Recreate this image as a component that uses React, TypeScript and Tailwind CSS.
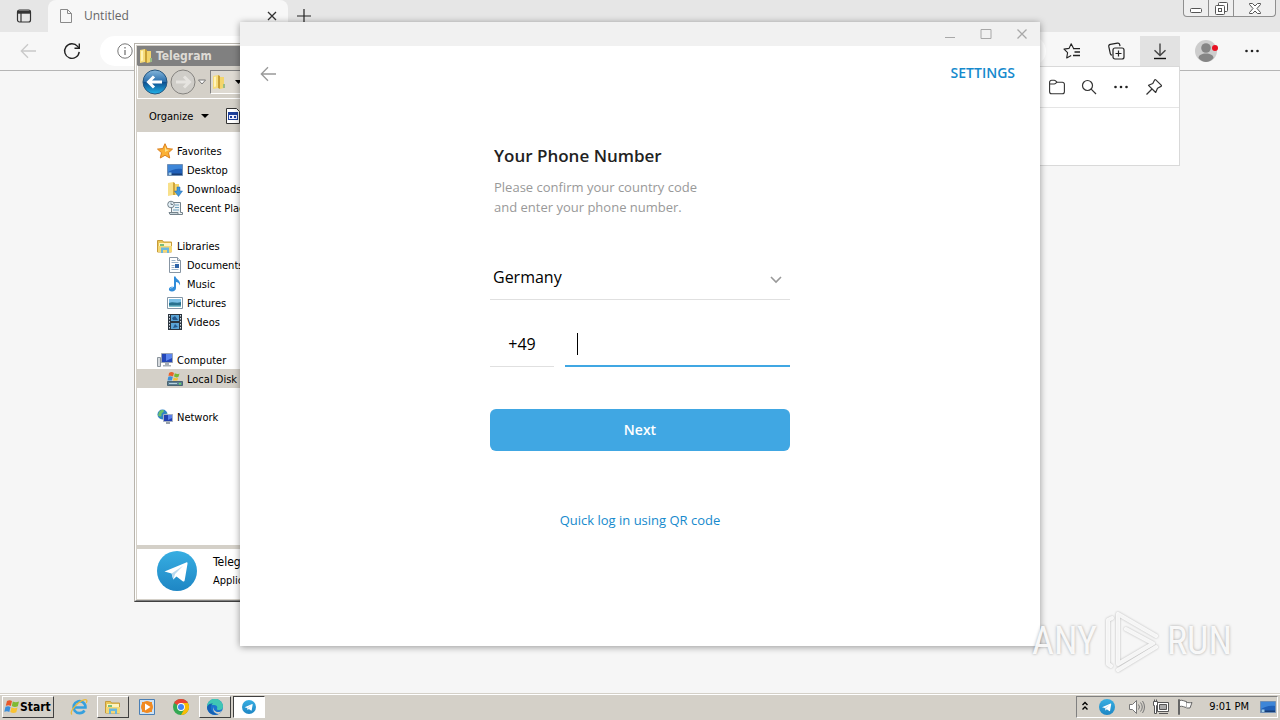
import React, { FC, ReactNode } from "react";
import clsx from "clsx";

interface IconProps {
  className?: string;
}

/* ---------- browser icons ---------- */

const TabActionsIcon = () => (
  <svg className="h-4 w-4" viewBox="0 0 16 16" fill="none" stroke="#333">
    <rect x="1.5" y="2" width="13" height="12" rx="2" strokeWidth="1.2" />
    <path d="M1.5 4.2h13" strokeWidth="3" />
    <path d="M5 5v9" strokeWidth="1.2" />
  </svg>
);

const PageIcon = () => (
  <svg className="h-4 w-4" viewBox="0 0 16 16" fill="none" stroke="#8a8a8a">
    <path d="M2.5 1.5h7l4 4v9h-11zM9.5 1.5v4h4" />
  </svg>
);

const ReloadIcon = () => (
  <svg className="h-5 w-5" viewBox="0 0 20 20" fill="none" stroke="#222" strokeWidth="1.4">
    <path d="M17.2 10.8A7.3 7.3 0 1 1 15.6 5.4L17 7" />
    <path d="M17.3 2.5v4.8h-4.8" />
  </svg>
);

const ArrowLeftIcon: FC<IconProps> = ({ className }) => (
  <svg className={className} viewBox="0 0 18 18" fill="none" stroke="currentColor" strokeWidth="1.5">
    <path d="M18 9H1.500M9 1.500L1.500 9 9 16.500" />
  </svg>
);

const InfoIcon = () => (
  <svg className="h-4 w-4" viewBox="0 0 16 16" fill="none" stroke="#777">
    <circle cx="8" cy="8" r="7.2" />
    <path d="M8 7v5M8 4v1.4" strokeWidth="1.3" />
  </svg>
);

const StarLinesIcon = () => (
  <svg className="h-[18px] w-[18px]" viewBox="0 0 18 18" fill="none" stroke="#222" strokeWidth="1.1">
    <path d="M10.600 6.600L8.200 1.700 6 6.400l-5 .7 3.600 3.500-.9 5.300 4.500-2.500" strokeLinejoin="round" />
    <path d="M10 6.600h7M11.500 10h5.500M10 13.500h7" strokeWidth="1.300" />
  </svg>
);

const CollectionsIcon = () => (
  <svg className="h-[18px] w-[18px]" viewBox="0 0 18 18" fill="none" stroke="#222" strokeWidth="1.2">
    <rect x="6" y="6" width="11" height="11" rx="2" />
    <path d="M11.5 8.5v6M8.5 11.5h6" />
    <path d="M5 13.2a2 2 0 0 1-1.7-1.6L1.800 4.700a2 2 0 0 1 1.600-2.300l7-1.300a2 2 0 0 1 2.300 1.600l.3 1.500" />
  </svg>
);

const DownloadIcon = () => (
  <svg className="h-[18px] w-[18px]" viewBox="0 0 18 18" fill="none" stroke="#444" strokeWidth="1.4">
    <path d="M9 1.500v12M3.500 8.300L9 13.600l5.500-5.300" />
    <path d="M3 16.500h12" stroke="#111" />
  </svg>
);

const AvatarIcon = () => (
  <svg className="h-6 w-6" viewBox="0 0 24 24">
    <circle cx="11" cy="12" r="11" fill="#cdcdcd" />
    <circle cx="11" cy="9" r="4.800" fill="#858585" />
    <path d="M3.500 19c0-3 3.500-4.500 7.500-4.500s7.500 1.500 7.500 4.500c-2 2.800-5 4-7.500 4s-5.500-1.200-7.500-4z" fill="#858585" />
    <circle cx="20" cy="9" r="3" fill="#e81123" />
  </svg>
);

const DotsIcon = () => (
  <svg className="h-4 w-4" viewBox="0 0 16 16" fill="#222">
    <circle cx="2.500" cy="8" r="1.300" />
    <circle cx="8" cy="8" r="1.300" />
    <circle cx="13.500" cy="8" r="1.300" />
  </svg>
);

const OpenFolderIcon = () => (
  <svg className="h-4 w-4" viewBox="0 0 16 16" fill="none" stroke="#333" strokeWidth="1.100">
    <path d="M.6 4V3.200A2 2 0 0 1 2.600 1.200h2.600c.6 0 1 .2 1.400.6L8 3.200h5.400a2 2 0 0 1 2 2v7.600a2 2 0 0 1-2 2H2.600a2 2 0 0 1-2-2z" />
    <path d="M.6 5h4.600c.6 0 1-.2 1.400-.6L8 3.200" />
  </svg>
);

const SearchIcon = () => (
  <svg className="h-4 w-4" viewBox="0 0 16 16" fill="none" stroke="#333" strokeWidth="1.200">
    <circle cx="6.500" cy="6.500" r="5" />
    <path d="M10.200 10.200L15 15" />
  </svg>
);

const PinIcon = () => (
  <svg className="h-[18px] w-[18px]" viewBox="0 0 18 18" fill="none" stroke="#333" strokeWidth="1.200" strokeLinejoin="round">
    <path d="M10.800 1.800l5.400 5.400c.4.400.3 1-.2 1.200l-3.500 1.800-1.800 4.300-7.200-7.200 4.300-1.800 1.800-3.500c.2-.5.8-.6 1.200-.2z" />
    <path d="M7 11l-5.500 5.500" />
  </svg>
);

/* ---------- explorer icons ---------- */

const FolderIcon = () => (
  <svg className="h-4 w-4 shrink-0" viewBox="0 0 16 16">
    <path d="M2 2l5-1v13l-5 1z" fill="#f6dc7b" />
    <path d="M7 1l2 1v13l-2-1z" fill="#c9a035" />
    <path d="M9 3h4v11l-4 1z" fill="#f3d56c" />
    <path d="M3 3l2-.5v10L3 13z" fill="#fff3b8" />
    <path d="M12 10h2v4h-2z" fill="#9cbc86" />
  </svg>
);

const StarIcon = () => (
  <svg className="h-4 w-4 shrink-0" viewBox="0 0 16 16">
    <path d="M8 .7l2.200 4.900 5.300.5-4 3.600 1.200 5.300L8 12.300 3.300 15l1.200-5.300-4-3.600 5.300-.5z" fill="#fbb034" stroke="#db7f1d" />
    <path d="M8 3l1.300 3.500 3.200.3L8 9z" fill="#ffe28a" />
  </svg>
);

const DesktopIcon: FC<IconProps> = ({ className }) => (
  <svg className={clsx("h-4 w-4 shrink-0", className)} viewBox="0 0 16 16">
    <path d="M.5 2.500h15v11H.5z" fill="#2060b8" stroke="#6f8fb5" />
    <path d="M1 3h14v4C9 6 5 8 1 10z" fill="#3e86d8" />
    <path d="M1 11.500h14V13H1z" fill="#173d75" />
    <path d="M1.500 10.500h3V13h-3z" fill="#9ecbe8" />
  </svg>
);

const DownloadsIcon = () => (
  <svg className="h-4 w-4 shrink-0" viewBox="0 0 16 16">
    <path d="M1 2l5-1v13l-5 1z" fill="#f8e08a" />
    <path d="M6 1l2 1v12H6z" fill="#d0a63a" />
    <path d="M8 3h4v11H8z" fill="#f3d56c" />
    <path d="M10 6h3v4h2.500l-4 5.500-4-5.500H10z" fill="#3f97dc" stroke="#2366ac" strokeWidth=".5" />
  </svg>
);

const RecentIcon = () => (
  <svg className="h-4 w-4 shrink-0" viewBox="0 0 16 16" stroke="#74828b">
    <path d="M4.500 2.500h9v10h2v2h-11z" fill="#eef3f5" />
    <path d="M8 5h4M8 7.500h4M6 10h6" stroke="#6ea0bd" />
    <circle cx="4" cy="4.500" r="3.300" fill="#e4f0f7" />
    <path d="M4 2.500v2h2" fill="none" />
    <path d="M2 12.500h9v2H3z" fill="#c7d3d8" />
  </svg>
);

const LibrariesIcon = () => (
  <svg className="h-4 w-4 shrink-0" viewBox="0 0 16 16">
    <path d="M.5 2.500h5l1 1.500h8v10H.5z" fill="#e9c757" stroke="#c79b3a" />
    <path d="M2 5h12v4H2z" fill="#fdf3c0" />
    <path d="M3 6h4v3H3z" fill="#78bd7a" />
    <path d="M1 8h14v6H1z" fill="#f4d874" />
    <path d="M4 9.500h8V15h-2v-3H6v3H4z" fill="#69b7de" />
  </svg>
);

const DocumentsIcon = () => (
  <svg className="h-4 w-4 shrink-0" viewBox="0 0 16 16">
    <path d="M2.500.5h8l3 3v12h-11z" fill="#fff" stroke="#8795a3" />
    <path d="M10.500.5v3h3" fill="#dde6ee" stroke="#8795a3" />
    <path d="M4.500 3.500h4M4.500 5.500h7M4.500 8.500h3M4.500 10.500h3M4.500 12.500h7" stroke="#9db6cc" />
    <path d="M8 7h4v4H8z" fill="#2d64a8" />
  </svg>
);

const MusicIcon = () => (
  <svg className="h-4 w-4 shrink-0" viewBox="0 0 16 16">
    <path d="M7 .5h1.500c.5 3 5.500 3.500 4.500 9-1-3-2.500-3.500-4-3.500v6c0 2-1.800 3.500-4 3.500S1.500 14.300 2 12.800C2.500 11 5 10.500 7 11z" fill="#2f8cda" />
    <path d="M3.500 12.500c.5-.8 1.500-1 2.500-.8" stroke="#a5d6f8" fill="none" />
  </svg>
);

const PicturesIcon = () => (
  <svg className="h-4 w-4 shrink-0" viewBox="0 0 16 16">
    <path d="M.5 2.500h15v11H.5z" fill="#fff" stroke="#8496a6" />
    <path d="M2 4h12v8H2z" fill="#7bc0e6" />
    <path d="M2 8c4-2 7 1 12-1v5H2z" fill="#28718e" />
    <path d="M2 10.500h12V12H2z" fill="#7fc3cf" />
  </svg>
);

const VideosIcon = () => (
  <svg className="h-4 w-4 shrink-0" viewBox="0 0 16 16">
    <path d="M1 0h14v16H1z" fill="#2c3640" />
    <path d="M4 1h8v6H4zM4 9h8v6H4z" fill="#5aa4d6" />
    <path d="M5 4l3-2 3 4H6zM6 14l2-4 3 3z" fill="#24578b" />
    <path d="M2.500 1v14M13.500 1v14" stroke="#d5dde4" strokeDasharray="1.500 1.500" />
  </svg>
);

const ComputerIcon = () => (
  <svg className="h-4 w-4 shrink-0" viewBox="0 0 16 16">
    <path d="M.5 5.500h3v9h-3z" fill="#d6dade" stroke="#8b949c" />
    <path d="M4.500 1.500h11v9h-11z" fill="#2346b8" stroke="#9aa4b4" />
    <path d="M9 2h6v4L9 9z" fill="#5c86ee" />
    <path d="M8 11h4v2h2v1.500H6V13h2z" fill="#a8b0b8" />
  </svg>
);

const DiskIcon = () => (
  <svg className="h-4 w-4 shrink-0" viewBox="0 0 16 16">
    <path d="M2 2c2-1.500 3.500-1 5 0L6 5.500C4.500 4.500 3 4.500 1.500 5z" fill="#e9622b" />
    <path d="M7.800 2.300c1.700 1 3.200 1 4.700.2l-1 3.300c-1.500 1-3 .7-4.500-.2z" fill="#78b833" />
    <path d="M1.300 5.800c1.500-1 3-.6 4.500.3l-1 3.400H.5z" fill="#3c8fd8" />
    <path d="M6.700 6.500c1.500.9 3 1 4.500.2l-.8 2.800H6z" fill="#f6c02e" />
    <path d="M.5 10.500h15v4H.5z" fill="#5d7f93" stroke="#4b6472" />
    <path d="M2 12.500h8" stroke="#b9d3de" />
    <path d="M12 12h2v1.500h-2z" fill="#5fe35f" />
  </svg>
);

const NetworkIcon = () => (
  <svg className="h-4 w-4 shrink-0" viewBox="0 0 16 16">
    <circle cx="5.500" cy="5.500" r="5" fill="#2f83c6" />
    <path d="M2 3c2-3 5-2 5-1S4 4 4.500 6 2 8 1 6.500zM7 6l3-2v3L8 9z" fill="#6cc06a" />
    <path d="M6.500 5.500h9v7h-9z" fill="#2340b0" stroke="#a7b1c2" />
    <path d="M11 6h4v3l-4 2z" fill="#5b80ea" />
    <path d="M9 13h4v2H9z" fill="#98a1aa" />
  </svg>
);

const CalendarIcon = () => (
  <svg className="h-4 w-4 shrink-0" viewBox="0 0 16 16">
    <path d="M1.500.5h10l3 3v12h-13z" fill="#fff" stroke="#333" />
    <path d="M3 4h10v8H3z" fill="#1d3f9c" />
    <path d="M4 7h8v4H4z" fill="#eef" />
    <path d="M5 8h2v2H5zM9 8h2v2H9z" fill="#1d3f9c" />
  </svg>
);

const TelegramIcon: FC<IconProps> = ({ className }) => (
  <svg className={clsx("shrink-0", className)} viewBox="0 0 40 40">
    <defs>
      <linearGradient id="tg" x1="0" y1="0" x2="0" y2="1">
        <stop offset="0" stopColor="#37aee2" />
        <stop offset="1" stopColor="#1e86c4" />
      </linearGradient>
    </defs>
    <circle cx="20" cy="20" r="20" fill="url(#tg)" />
    <path d="M7.500 20.500L29.200 11.400c1-.4 1.500.2 1.300 1.400l-2.800 16.500c-.2 1.200-1 1.500-2 .9l-6.200-4.600-3.200 3-1.700-6z" fill="#fff" />
    <path d="M14.600 22.600l11.500-7.800-8 8.300-1.800 5.500z" fill="#b9d9ee" />
  </svg>
);

const OrbIcon: FC<{ back?: boolean }> = ({ back }) => (
  <svg className="h-[26px] w-[26px]" viewBox="0 0 26 26">
    <defs>
      <linearGradient id="orb" x1="0" y1="0" x2="0" y2="1">
        <stop offset="0" stopColor="#86b7dc" />
        <stop offset=".48" stopColor="#2b6fac" />
        <stop offset=".5" stopColor="#0d4c8c" />
        <stop offset="1" stopColor="#22b4ea" />
      </linearGradient>
    </defs>
    <circle cx="13" cy="13" r="12" fill={back ? "url(#orb)" : "#cfcdc8"} stroke={back ? "#28577f" : "#85837f"} />
    <path
      d={back ? "M20 13H7M12 7.500L6.500 13l5.500 5.500" : "M6 13h13M14 7.500l5.500 5.500-5.500 5.500"}
      fill="none"
      stroke={back ? "#fff" : "#e6e4e0"}
      strokeWidth="3"
    />
  </svg>
);

/* ---------- taskbar icons ---------- */

const WindowsFlagIcon = () => (
  <svg className="h-4 w-4 shrink-0" viewBox="0 0 16 16">
    <path d="M3 2c2-1.200 3.500-1 5 0L6.800 7C5.300 6 3.800 6 1.800 6.800z" fill="#e8582a" />
    <path d="M8.800 2.500c2 1.100 4 1 6.200 0l-1.200 4.800c-2 1-4 .9-6-.2z" fill="#7fba35" />
    <path d="M1.500 7.800c2-.8 3.500-.8 5 .2l-1.200 5c-1.500-1-3-1-5-.2z" fill="#3a8edb" />
    <path d="M7.500 8.300c2 1.100 4 1.200 6 .2l-1.200 4.800c-2 1-4 .9-6-.2z" fill="#f9c333" />
  </svg>
);

const ExplorerIeIcon = () => (
  <svg className="h-[18px] w-[18px]" viewBox="0 0 18 18" fill="none">
    <path d="M14.500 12.500A6 6 0 1 1 15.500 9.500H4" stroke="#35a0de" strokeWidth="2.600" />
    <path d="M2 16.500C-1 14 7 4 14 1.800c3-.8 3.500 1 2.200 3.200" stroke="#e8b93c" strokeWidth="1.300" />
  </svg>
);

const MediaPlayerIcon = () => (
  <svg className="h-4 w-4" viewBox="0 0 16 16">
    <path d="M.5.500h15v15H.5z" fill="#cfe2f3" stroke="#4a7fb5" />
    <path d="M3 3h10v10H3z" fill="#f18a21" />
    <circle cx="8" cy="8" r="6" fill="#f18a21" />
    <path d="M6 4.500l5.500 3.500L6 11.500z" fill="#fff" />
  </svg>
);

const ChromeIcon = () => (
  <svg className="h-4 w-4" viewBox="0 0 16 16">
    <circle cx="8" cy="8" r="8" fill="#34a853" />
    <path d="M8 8L1.070 4A8 8 0 0 1 14.930 4z" fill="#ea4335" />
    <path d="M8 8V4h6.930A8 8 0 0 1 8 16l3.460-6z" fill="#fbbc05" />
    <circle cx="8" cy="8" r="3.900" fill="#fff" />
    <circle cx="8" cy="8" r="3" fill="#4285f4" />
  </svg>
);

const EdgeIcon = () => (
  <svg className="h-4 w-4" viewBox="0 0 16 16">
    <circle cx="8" cy="8" r="8" fill="#1b75cf" />
    <path d="M0 8a8 8 0 0 1 16-.5c0 2.500-2 3.700-4 3.500-1.500 0-2.500-.8-2-1.500.8-1.500-.3-3.500-3-3.500C4 6 1 6.500 0 8z" fill="#3fc6b4" />
    <path d="M0 8c1-3 4-4 6-3.500C3.500 6 3 10 5.500 12.500 7 14 9.500 15 12 14.800A8 8 0 0 1 0 8z" fill="#1460b4" />
    <path d="M7 8c-.8 2.500.8 5 4 5 1.500 0 3-.4 4-1.200-.8 1.500-2 2.600-3.500 3.200C7.500 15 5 11 7 8z" fill="#d4d0c8" />
  </svg>
);

const ChevronsUpIcon = () => (
  <svg className="h-3 w-2" viewBox="0 0 8 12" fill="none" stroke="#000" strokeWidth="1.400">
    <path d="M1.500 4L4 1.500 6.500 4M1.500 8.500L4 6l2.500 2.500" />
  </svg>
);

const SpeakerIcon = () => (
  <svg className="h-4 w-4" viewBox="0 0 16 16" fill="none" stroke="#777">
    <path d="M.5 5.500h3l4-4v13l-4-4h-3z" fill="#fff" />
    <path d="M9.500 5.500q2 2.500 0 5M11.500 3.500q3.500 4.500 0 9M13.500 2q4 6 0 12" />
  </svg>
);

const NetTrayIcon = () => (
  <svg className="h-4 w-4" viewBox="0 0 16 16" stroke="#555">
    <path d="M4.500 3.500h11v9h-11z" fill="#fff" />
    <path d="M6.500 5.500h7v5h-7z" fill="#aaa" />
    <path d="M6 14.500h9" />
    <path d="M.5 2.500h4v4h-1v8h-2v-8h-1z" fill="#fff" />
    <path d="M1.500.5v2M3.500.5v2" />
  </svg>
);

const FlagIcon = () => (
  <svg className="h-4 w-4" viewBox="0 0 16 16" fill="#fff" stroke="#666">
    <path d="M2.500 1.500c3-1 5 1 7 1v6c-2 0-4-2-7-1z" />
    <path d="M9.500 3.500c2 0 3 .5 5.500 0L13 9H9.500" />
    <path d="M1.500.5h1v15h-1z" />
  </svg>
);

/* ---------- browser ---------- */

interface IconButtonProps {
  label: string;
  children: ReactNode;
  className?: string;
}

const IconButton: FC<IconButtonProps> = ({ label, children, className }) => (
  <button
    type="button"
    aria-label={label}
    className={clsx("flex shrink-0 items-center justify-center", className)}
  >
    {children}
  </button>
);

const WindowButtons = () => (
  <div className="mr-1 flex h-[17px] rounded-b border border-t-0 border-[#8f8f8f] bg-[#efefef]">
    <IconButton label="Minimize" className="w-[25px] border-r border-[#8f8f8f]">
      <svg className="h-4 w-4" viewBox="0 0 16 16" fill="#fff" stroke="#555">
        <rect x="2.500" y="8.500" width="11" height="4" rx="1" />
      </svg>
    </IconButton>
    <IconButton label="Restore" className="w-[25px] border-r border-[#8f8f8f]">
      <svg className="h-4 w-4" viewBox="0 0 16 16" fill="#fff" stroke="#555">
        <rect x="5.500" y="2.500" width="9" height="9" rx="1" />
        <rect x="2.500" y="5.500" width="9" height="9" rx="1" />
        <rect x="5.500" y="8.500" width="3" height="3" />
      </svg>
    </IconButton>
    <IconButton label="Close" className="w-[41px]">
      <svg className="h-4 w-4" viewBox="0 0 16 16" fill="#fff" stroke="#555">
        <path d="M2.500 3.500h3L8 6l2.500-2.500h3v1L10 8.500l3.500 4v1h-3L8 11l-2.500 2.500h-3v-1L6 8.500 2.500 4.500z" />
      </svg>
    </IconButton>
  </div>
);

const BrowserHeader = () => (
  <header className="border-b border-[#b5b5b5] font-['Open_Sans',sans-serif]">
    <div className="flex h-8 bg-[#e6e6e6]">
      <IconButton label="Tab actions" className="w-12">
        <TabActionsIcon />
      </IconButton>
      <div className="flex w-60 items-center rounded-t-lg bg-[#f7f7f7] pl-2.5">
        <PageIcon />
        <span className="ml-2.5 flex-1 text-xs text-[#666]">Untitled</span>
        <IconButton label="Close tab" className="w-8">
          <svg className="h-2.5 w-2.5" viewBox="0 0 10 10" stroke="#333" strokeWidth="1.300">
            <path d="M1 1l8 8M9 1L1 9" />
          </svg>
        </IconButton>
      </div>
      <IconButton label="New tab" className="w-8">
        <svg className="h-4 w-4" viewBox="0 0 16 16" stroke="#222" strokeWidth="1.200">
          <path d="M8 1v14M1 8h14" />
        </svg>
      </IconButton>
      <div className="flex flex-1 justify-end">
        <WindowButtons />
      </div>
    </div>
    <div className="flex h-[38px] items-center bg-[#f7f7f7]">
      <IconButton label="Back" className="w-14">
        <ArrowLeftIcon className="h-4 w-4 text-[#c9c9c9]" />
      </IconButton>
      <IconButton label="Reload" className="w-8">
        <ReloadIcon />
      </IconButton>
      <div className="ml-3 flex h-[30px] flex-1 items-center rounded-full bg-white pl-[17px]">
        <InfoIcon />
        <input aria-label="Address" className="h-6 flex-1 outline-none" />
      </div>
      <IconButton label="Favorites" className="ml-1.5 w-10">
        <StarLinesIcon />
      </IconButton>
      <IconButton label="Collections" className="ml-1 w-10">
        <CollectionsIcon />
      </IconButton>
      <IconButton label="Downloads" className="ml-1 h-[30px] w-10 bg-[#e2e2e2]">
        <DownloadIcon />
      </IconButton>
      <IconButton label="Profile" className="w-[54px]">
        <AvatarIcon />
      </IconButton>
      <IconButton label="Menu" className="mr-2.5 w-9">
        <DotsIcon />
      </IconButton>
    </div>
  </header>
);

const DownloadsPanel = () => (
  <div className="absolute top-[66px] right-[100px] h-[100px] w-[360px] border border-[#d9d9d9] bg-white">
    <div className="flex h-[41px] items-center justify-end border-b border-[#e5e5e5] pr-2">
      <IconButton label="Open downloads folder" className="w-8">
        <OpenFolderIcon />
      </IconButton>
      <IconButton label="Search downloads" className="w-8">
        <SearchIcon />
      </IconButton>
      <IconButton label="More options" className="w-8">
        <DotsIcon />
      </IconButton>
      <IconButton label="Pin downloads" className="w-[34px]">
        <PinIcon />
      </IconButton>
    </div>
  </div>
);

/* ---------- explorer ---------- */

const treeGroups = [
  {
    name: "Favorites",
    icon: <StarIcon />,
    items: [
      { name: "Desktop", icon: <DesktopIcon /> },
      { name: "Downloads", icon: <DownloadsIcon /> },
      { name: "Recent Places", icon: <RecentIcon /> },
    ],
  },
  {
    name: "Libraries",
    icon: <LibrariesIcon />,
    items: [
      { name: "Documents", icon: <DocumentsIcon /> },
      { name: "Music", icon: <MusicIcon /> },
      { name: "Pictures", icon: <PicturesIcon /> },
      { name: "Videos", icon: <VideosIcon /> },
    ],
  },
  {
    name: "Computer",
    icon: <ComputerIcon />,
    items: [{ name: "Local Disk (C:)", icon: <DiskIcon />, selected: true }],
  },
  { name: "Network", icon: <NetworkIcon />, items: [] },
];

const ExplorerWindow = () => (
  <section className="absolute top-[43px] left-[134px] flex h-[559px] w-[640px] flex-col border border-[#b8b4ac] border-r-[#404040] border-b-[#404040] bg-[#d4d0c8] font-['DejaVu_Sans_Condensed','DejaVu_Sans',sans-serif] text-[11px] text-black">
    <div className="flex flex-1 flex-col border border-white border-r-[#808080] border-b-[#808080] p-px">
      <div className="flex h-[19px] items-center bg-[#808080] pl-px text-xs font-bold text-[#dedbd5]">
        <FolderIcon />
        <span className="ml-0.5">Telegram</span>
      </div>
      <div className="flex h-[34px] items-center border border-white border-t-[#808080] pl-1">
        <IconButton label="Back">
          <OrbIcon back />
        </IconButton>
        <IconButton label="Forward" className="ml-0.5">
          <OrbIcon />
        </IconButton>
        <svg className="ml-0.5 h-2 w-2" viewBox="0 0 8 8" fill="#fff" stroke="#777">
          <path d="M.5 2h7L4 6z" />
        </svg>
        <div className="ml-1 flex h-6 flex-1 items-center border border-[#808080] bg-[#dedad2] border-r-white border-b-white">
          <FolderIcon />
          <svg className="ml-2 h-2 w-2" viewBox="0 0 8 8">
            <path d="M0 2h7L3.500 6z" />
          </svg>
        </div>
      </div>
      <div className="flex h-[33px] items-center pl-3">
        <button type="button" className="flex items-center">
          <span className="pt-[3px]">Organize</span>
          <svg className="ml-2 h-2 w-2" viewBox="0 0 8 8">
            <path d="M0 2h8L4 6z" />
          </svg>
        </button>
        <IconButton label="Views" className="ml-4">
          <CalendarIcon />
        </IconButton>
      </div>
      <nav className="flex flex-1 flex-col gap-[19px] border-b-4 border-[#d4d0c8] bg-white pt-[9px]">
        {treeGroups.map((group) => (
          <div key={group.name}>
            <div className="flex h-[19px] items-center gap-1 pl-5">
              {group.icon}
              <span className="pt-[3px]">{group.name}</span>
            </div>
            {group.items.map((item) => (
              <div
                key={item.name}
                className={clsx(
                  "flex h-[19px] items-center gap-1 pl-[30px]",
                  "selected" in item && "bg-[#d4d0c8]"
                )}
              >
                {item.icon}
                <span className="pt-[3px] whitespace-nowrap">{item.name}</span>
              </div>
            ))}
          </div>
        ))}
      </nav>
      <div className="flex h-[50px] items-start bg-white pt-0.5 pl-5">
        <TelegramIcon className="h-10 w-10" />
        <div className="ml-4 pt-px">
          <div className="text-xs leading-5">Telegram</div>
          <div className="leading-[18px]">Application</div>
        </div>
      </div>
    </div>
  </section>
);

/* ---------- telegram ---------- */

const TelegramWindow = () => (
  <section className="absolute top-[22px] left-[240px] w-[800px] bg-white pb-[116px] font-['Open_Sans',sans-serif] shadow-[0_1px_7px_rgba(0,0,0,0.4)]">
    <div className="flex h-6 justify-end bg-[#f1f1f1] text-[#a8a8a8]">
      <IconButton label="Minimize" className="w-9">
        <svg className="h-3 w-3" viewBox="0 0 12 12" stroke="currentColor">
          <path d="M1 9.500h10" />
        </svg>
      </IconButton>
      <IconButton label="Maximize" className="w-9">
        <svg className="h-3 w-3" viewBox="0 0 12 12" fill="none" stroke="currentColor">
          <path d="M1 1.500h10v9H1z" />
        </svg>
      </IconButton>
      <IconButton label="Close" className="w-9">
        <svg className="h-3 w-3" viewBox="0 0 12 12" stroke="currentColor" strokeWidth="1.300">
          <path d="M1.500 1.500l9 9M10.500 1.500l-9 9" />
        </svg>
      </IconButton>
    </div>
    <div className="flex h-[55px] items-center justify-between pr-[25px] pl-5">
      <IconButton label="Go back">
        <ArrowLeftIcon className="h-4 w-4 text-[#999]" />
      </IconButton>
      <button type="button" className="pb-0.5 text-sm font-semibold text-[#168acd]">
        SETTINGS
      </button>
    </div>
    <form className="mx-auto flex w-[300px] flex-col pt-[43px]">
      <h1 className="pl-1 text-[17px] leading-6 font-semibold text-[#222]">
        Your Phone Number
      </h1>
      <p className="mt-[9px] pl-1 text-[13px] leading-5 text-[#999]">
        Please confirm your country code
        <br />
        and enter your phone number.
      </p>
      <div className="mt-[38px] flex h-[45px] items-center border-b border-[#e0e0e0]">
        <select
          aria-label="Country"
          className="flex-1 appearance-none bg-transparent pl-[3px] text-base text-black outline-none"
        >
          <option>Germany</option>
        </select>
        <svg className="mt-1 mr-2 h-3 w-3" viewBox="0 0 12 12" fill="none" stroke="#999" strokeWidth="1.600">
          <path d="M1 4l5 5 5-5" />
        </svg>
      </div>
      <div className="mt-[23px] flex gap-[11px]">
        <input
          aria-label="Country code"
          defaultValue="+49"
          className="h-11 w-16 border-b border-[#e0e0e0] pb-0.5 text-center text-base text-black outline-none"
        />
        <div className="flex h-11 flex-1 items-center border-b-2 border-[#40a7e3] pl-3">
          <span className="h-[22px] w-px bg-black" />
          <input
            aria-label="Phone number"
            type="tel"
            className="h-9 w-full text-base text-black outline-none"
          />
        </div>
      </div>
      <button
        type="submit"
        className="mt-[42px] h-[42px] rounded-md bg-[#40a7e3] text-sm font-semibold text-white"
      >
        Next
      </button>
      <a href="#qr" className="mt-[59px] text-center text-[13px] leading-5 text-[#168acd]">
        Quick log in using QR code
      </a>
    </form>
  </section>
);

/* ---------- watermark ---------- */

const Watermark = () => (
  <div className="pointer-events-none absolute right-12 bottom-[20px] flex h-16 items-center gap-2 font-['Roboto_Condensed','Open_Sans_Condensed','Noto_Sans_ExtraCondensed','Noto_Sans_Condensed','Liberation_Sans',sans-serif] text-[38px] leading-none text-white/90 [text-shadow:0_0_3px_rgba(0,0,0,0.35)]">
    <span>ANY</span>
    <svg
      className="h-16 w-[54px] drop-shadow-[0_0_1px_rgba(0,0,0,0.3)]"
      viewBox="0 0 54 64"
      fill="none"
      stroke="#fff"
      strokeWidth="4"
      strokeLinecap="round"
      strokeLinejoin="round"
      strokeOpacity=".85"
    >
      <path d="M7 9L3 11v44l3 2" />
      <path d="M51 27L13 5v50l35-20.500L21 20" />
      <path d="M13 61l38-23" />
    </svg>
    <span>RUN</span>
  </div>
);

/* ---------- taskbar ---------- */

interface TaskButtonProps {
  label: string;
  active?: boolean;
  children: ReactNode;
}

const TaskButton: FC<TaskButtonProps> = ({ label, active, children }) => (
  <button
    type="button"
    aria-label={label}
    className={clsx(
      "flex h-[22px] w-8 items-center justify-center border",
      active
        ? "border-t-[#404040] border-r-white border-b-white border-l-[#404040] bg-white"
        : "border-t-white border-r-[#404040] border-b-[#404040] border-l-white"
    )}
  >
    {children}
  </button>
);

const Taskbar = () => (
  <footer className="flex h-[27px] shrink-0 items-center border-t border-[#d4d0c8] bg-[#d4d0c8] pr-0.5 pl-0.5 font-['DejaVu_Sans_Condensed','DejaVu_Sans',sans-serif] text-[11px] text-black shadow-[inset_0_1px_0_#fff]">
    <button
      type="button"
      className="flex h-[22px] w-[52px] items-center border border-t-white border-r-[#404040] border-b-[#404040] border-l-white pl-px text-xs font-bold"
    >
      <WindowsFlagIcon />
      Start
    </button>
    <IconButton label="Internet Explorer" className="ml-4 w-[18px]">
      <ExplorerIeIcon />
    </IconButton>
    <div className="ml-[9px] flex items-center">
      <TaskButton label="Windows Explorer">
        <LibrariesIcon />
      </TaskButton>
      <IconButton label="Media Player" className="w-9">
        <MediaPlayerIcon />
      </IconButton>
      <IconButton label="Chrome" className="w-8">
        <ChromeIcon />
      </IconButton>
      <div className="ml-0.5 flex gap-0.5">
        <TaskButton label="Edge">
          <EdgeIcon />
        </TaskButton>
        <TaskButton label="Telegram" active>
          <TelegramIcon className="h-3.5 w-3.5" />
        </TaskButton>
      </div>
    </div>
    <div className="ml-auto flex h-[22px] w-[202px] items-center border border-t-[#808080] border-r-white border-b-white border-l-[#808080] pr-px pl-1">
      <ChevronsUpIcon />
      <TelegramIcon className="ml-2.5 h-4 w-4" />
      <div className="ml-3.5 flex gap-2">
        <SpeakerIcon />
        <NetTrayIcon />
        <FlagIcon />
      </div>
      <span className="ml-auto whitespace-nowrap">9:01 PM</span>
      <DesktopIcon className="ml-[11px]" />
    </div>
  </footer>
);

const App = () => {
  return (
    <div className="flex h-screen flex-col overflow-hidden">
      <main className="relative flex-1 bg-[#f6f6f6]">
        <BrowserHeader />
        <DownloadsPanel />
        <ExplorerWindow />
        <TelegramWindow />
        <Watermark />
      </main>
      <Taskbar />
    </div>
  );
};

export default App;
